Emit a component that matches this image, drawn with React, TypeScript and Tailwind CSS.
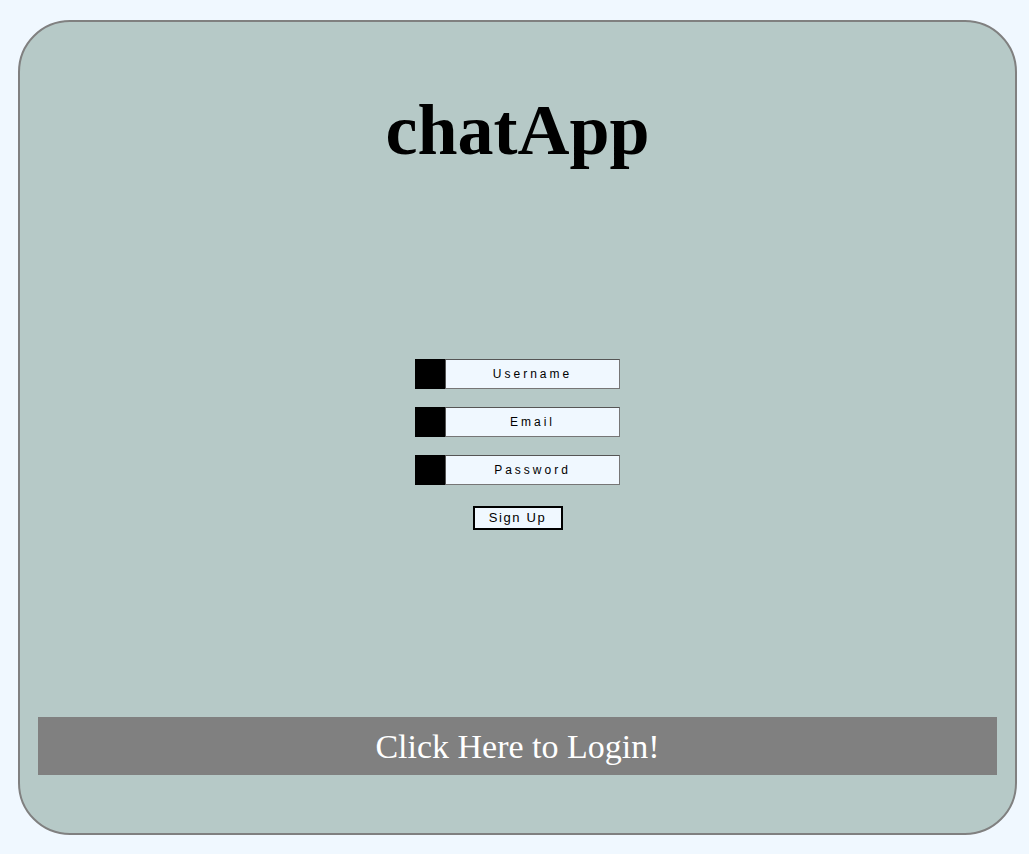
import React from 'react';

const Field: React.FC<{ placeholder: string; type?: string }> = ({ placeholder, type = 'text' }) => {
  return (
    <div className="flex h-[30px] w-[205px]">
      <div className="w-[30px] h-full bg-black" />
      <input
        type={type}
        placeholder={placeholder}
        className="flex-1 h-full bg-[#f0f8ff] border border-[#767676] border-t-[#555] border-l-[#555] text-center text-[12px] tracking-[3px] text-black placeholder:text-black outline-none font-['Liberation_Sans',Arial,sans-serif]"
      />
    </div>
  );
};

export default function App() {
  return (
    <div className="min-h-[854px] w-full bg-[#f0f8ff] pt-[20px] pl-[18px]">
      <div className="w-[999px] h-[815px] rounded-[52px] border-2 border-[#808080] bg-[#b6c9c7] px-[18px] flex flex-col items-center">
        <h1 className="pt-[72px] text-[72px] leading-none font-bold text-black font-['Liberation_Serif','Times_New_Roman',serif]">
          chatApp
        </h1>

        <form className="mt-[193px] flex flex-col items-center gap-[18px]">
          <Field placeholder="Username" />
          <Field placeholder="Email" type="email" />
          <Field placeholder="Password" type="password" />
          <button
            type="button"
            className="mt-[3px] w-[90px] h-[24px] border-2 border-black bg-[#f0f8ff] text-[13px] tracking-[1.6px] text-black font-['Liberation_Sans',Arial,sans-serif]"
          >
            Sign Up
          </button>
        </form>

        <div className="mt-auto mb-[58px] w-full h-[58px] bg-[#808080] flex items-center justify-center">
          <span className="text-[34px] text-white font-['Liberation_Serif','Times_New_Roman',serif]">
            Click Here to Login!
          </span>
        </div>
      </div>
    </div>
  );
}
